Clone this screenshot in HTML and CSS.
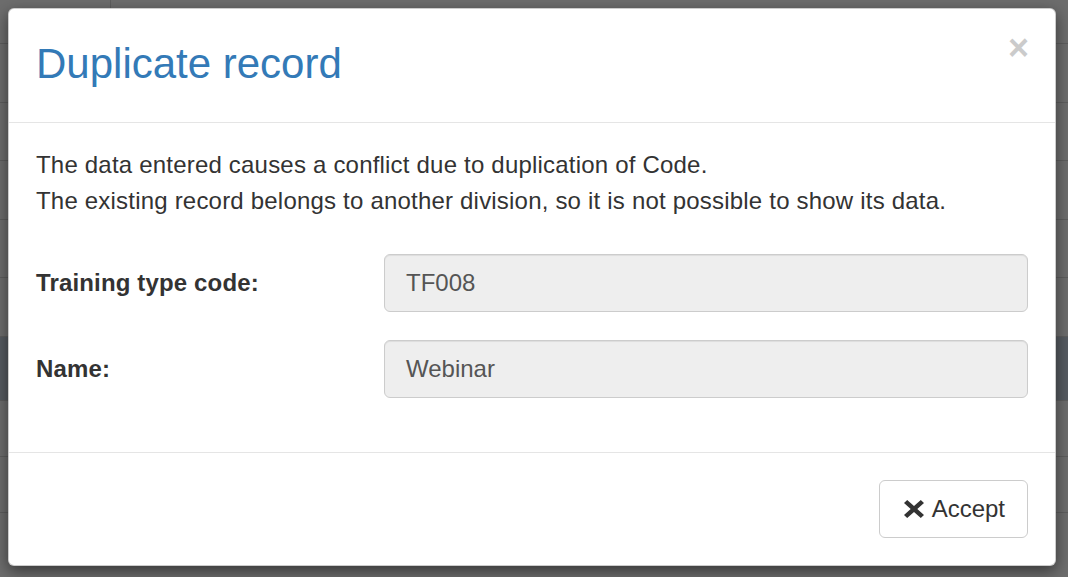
FILE: index.html
```html
<!DOCTYPE html>
<html lang="en">
<head>
<meta charset="utf-8">
<title>Duplicate record</title>
<link rel="stylesheet" href="styles.css">
</head>
<body>
<div class="page">
  <div class="page-row page-top">
    <div class="page-cell first"></div>
    <div class="page-cell head">Class</div>
  </div>
  <div class="page-row"></div>
  <div class="page-row"></div>
  <div class="page-row"></div>
  <div class="page-row"></div>
  <div class="page-row"></div>
  <div class="page-row selected"></div>
  <div class="page-row short"></div>
  <div class="page-row short"></div>
</div>

<div class="modal" role="dialog">
  <div class="modal-header">
    <h2 class="modal-title">Duplicate record</h2>
    <button class="close" type="button" aria-label="Close">×</button>
  </div>
  <div class="modal-body">
    <p class="message">The data entered causes a conflict due to duplication of Code.<br>The existing record belongs to another division, so it is not possible to show its data.</p>
    <div class="form">
      <label class="form-label">Training type code:</label>
      <div class="form-control">TF008</div>
      <label class="form-label">Name:</label>
      <div class="form-control">Webinar</div>
    </div>
  </div>
  <div class="modal-footer">
    <button class="btn" type="button">
      <svg class="btn-icon" viewBox="0 0 20 18" width="20" height="18" aria-hidden="true">
        <path d="M3.2 0 L10 6.1 L16.8 0 L20 3 L13.3 9 L20 15 L16.8 18 L10 11.9 L3.2 18 L0 15 L6.7 9 L0 3 Z" fill="#333"/>
      </svg>
      <span>Accept</span>
    </button>
  </div>
</div>
</body>
</html>
```

FILE: styles.css
```css
* { box-sizing: border-box; }

html, body {
  margin: 0;
  padding: 0;
  height: 100%;
}

body {
  background: #6d6d6d;
  font-family: "Liberation Sans", Arial, sans-serif;
  color: #333;
  overflow: hidden;
}

/* underlying page seen through the backdrop */
.page {
  display: flex;
  flex-direction: column;
}

.page-row {
  height: 58.6px;
  flex: none;
  border-bottom: 1px solid #5e5e5e;
  display: flex;
}

.page-top {
  height: 44px;
}

.page-cell.first {
  width: 111px;
  border-right: 1px solid #5e5e5e;
}

.page-cell.head {
  margin-left: 625px;
  padding-top: 4px;
  font-size: 21px;
  font-weight: bold;
  color: #1c1c1c;
}

.page-row.selected {
  background: #565b61;
  height: 64px;
}

.page-row.short {
  height: 56px;
}

/* modal */
.modal {
  position: absolute;
  left: 8px;
  top: 8px;
  width: 1048px;
  height: 558px;
  background: #fff;
  border: 1px solid rgba(0, 0, 0, 0.2);
  border-radius: 6px;
  box-shadow: 0 5px 15px rgba(0, 0, 0, 0.5);
  display: flex;
  flex-direction: column;
}

.modal-header {
  display: flex;
  justify-content: space-between;
  align-items: flex-start;
  padding: 32px 27px 35px 27px;
  border-bottom: 1px solid #e5e5e5;
}

.modal-title {
  margin: 0;
  font-size: 42px;
  line-height: 46px;
  font-weight: normal;
  color: #337ab7;
}

.close {
  margin: -11px -1px 0 0;
  padding: 0;
  border: 0;
  background: transparent;
  font-family: "Liberation Sans", Arial, sans-serif;
  font-size: 36px;
  line-height: 1;
  font-weight: bold;
  color: #000;
  opacity: 0.2;
}

.modal-body {
  padding: 24px 27px 54px 27px;
  flex: 1;
}

.message {
  margin: 0;
  font-size: 24px;
  line-height: 36px;
  letter-spacing: 0.2px;
}

.form {
  margin-top: 35px;
  display: grid;
  grid-template-columns: 348px 1fr;
  row-gap: 28px;
  align-items: center;
}

.form-label {
  font-size: 24px;
  font-weight: bold;
  line-height: 36px;
  letter-spacing: 0.15px;
}

.form-control {
  height: 58px;
  padding: 0 21px;
  display: flex;
  align-items: center;
  font-size: 24px;
  color: #555;
  background: #eee;
  border: 1px solid #ccc;
  border-radius: 6px;
  box-shadow: inset 0 1px 1px rgba(0, 0, 0, 0.075);
}

.modal-footer {
  display: flex;
  justify-content: flex-end;
  padding: 27px 27px 27px 27px;
  border-top: 1px solid #e5e5e5;
}

.btn {
  height: 58px;
  padding: 0 22px 0 24px;
  display: flex;
  align-items: center;
  gap: 8px;
  background: #fff;
  border: 1px solid #ccc;
  border-radius: 6px;
  font-family: "Liberation Sans", Arial, sans-serif;
  font-size: 24px;
  color: #333;
}

.btn-icon {
  display: block;
  margin-top: -1px;
}
```
